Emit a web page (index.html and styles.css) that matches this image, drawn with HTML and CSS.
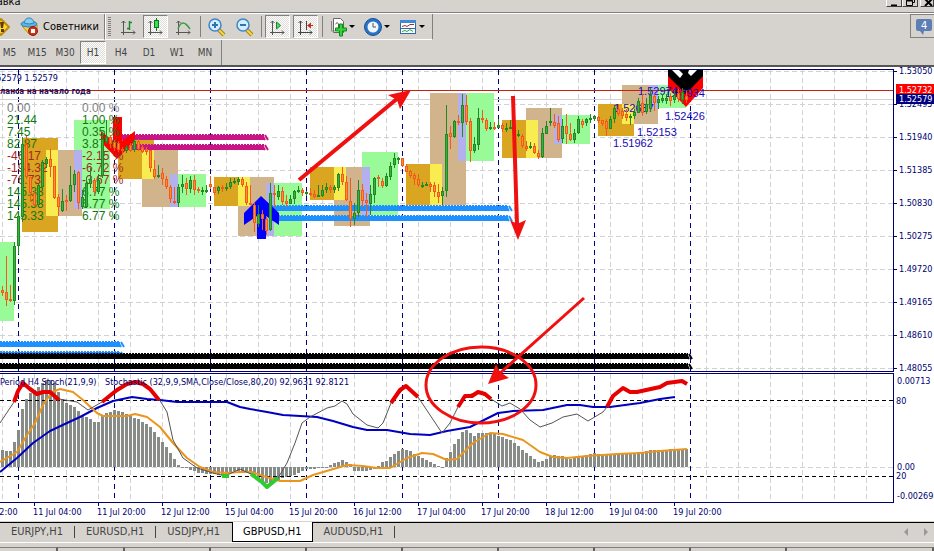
FILE: index.html
```html
<!DOCTYPE html>
<html lang="ru">
<head>
<meta charset="utf-8">
<title>GBPUSD,H1</title>
<link rel="stylesheet" href="styles.css">
</head>
<body>
<header class="menubar">
  <a class="menu-item" href="#">Справка</a>
  <div class="window-buttons">
    <button aria-label="Свернуть"><svg width="14" height="14"><path d="M4 11.500h6" stroke="#000" stroke-width="2"/></svg></button>
    <button aria-label="Восстановить"><svg width="14" height="14"><path d="M5.500 4.500v-2h6v6h-2M5 3h7M3.500 6.500h6v5h-6zM3 7h7" fill="none" stroke="#000"/></svg></button>
    <button class="close" aria-label="Закрыть"><svg width="14" height="14"><path d="M4 5l7 7M11 5l-7 7" stroke="#000" stroke-width="2"/></svg></button>
  </div>
</header>
<div class="toolbars">
  <div class="row">
    <div class="toolbar experts">
      <button class="warn" aria-label="Журнал"><svg width="18" height="20"><path d="M8 2l8 8-8 8-8-8z" fill="#ffd62e" stroke="#c08a10" stroke-width="2" stroke-linejoin="round"/><path d="M7 5h4l-1 6H8zM8 12h3v3H8z" fill="#5a3c00"/></svg></button>
      <button class="advisors"><svg width="20" height="20"><path d="M2 9l8 9 7-6V8z" fill="#f6d33c" stroke="#b08a1c"/><ellipse cx="9" cy="7" rx="8" ry="3" fill="#5ab4e6" stroke="#2f7fb5"/><path d="M4 6q1-5 5-5t5 5q-5 2-10 0z" fill="#84cef2" stroke="#3585b8"/><circle cx="13" cy="14" r="4.500" fill="#d0301c" stroke="#8e1c10"/><rect x="11" y="12" width="4" height="4" fill="#fff"/></svg>Советники</button>
    </div>
    <div class="toolbar charts">
      <span class="grip"></span>
      <button aria-label="Бары"><svg width="20" height="20"><path d="M5.500 4v14M3 15.500h14M3.500 6l2-2 2 2M15 13.500l2 2-2 2" fill="none" stroke="#555"/><path d="M11.500 4v9M12 5.500h2M9 11.500h2" stroke="#1c8a2c" stroke-width="1.500"/></svg></button>
      <button class="on" aria-label="Свечи"><svg width="20" height="20"><path d="M4.500 4v14M2 15.500h14M2.500 6l2-2 2 2M14 13.500l2 2-2 2" fill="none" stroke="#555"/><path d="M10.500 1v13" stroke="#0a7a20"/><rect x="8.500" y="3.500" width="4" height="7" fill="#3cdc50" stroke="#0a7a20"/></svg></button>
      <button aria-label="Линия"><svg width="20" height="20"><path d="M4.500 4v14M2 15.500h14M2.500 6l2-2 2 2M14 13.500l2 2-2 2" fill="none" stroke="#555"/><path d="M4 12q2-6 5-6t7 6" fill="none" stroke="#3a9a48" stroke-width="1.500"/></svg></button>
      <span class="sep"></span>
      <button aria-label="Увеличить"><svg width="20" height="20"><path d="M11 12l6 6" stroke="#a88414" stroke-width="4"/><path d="M11 12l6 6" stroke="#f7d84a" stroke-width="2"/><circle cx="8" cy="8" r="6" fill="#d3efff" stroke="#3f86c8" stroke-width="1.500"/><path d="M5 8h6M8 5v6" stroke="#2d74b4" stroke-width="2"/></svg></button>
      <button aria-label="Уменьшить"><svg width="20" height="20"><path d="M11 12l6 6" stroke="#a88414" stroke-width="4"/><path d="M11 12l6 6" stroke="#f7d84a" stroke-width="2"/><circle cx="8" cy="8" r="6" fill="#d3efff" stroke="#3f86c8" stroke-width="1.500"/><path d="M5 8h6" stroke="#2d74b4" stroke-width="2"/></svg></button>
      <span class="sep"></span>
      <button class="on" aria-label="Автопрокрутка"><svg width="20" height="20"><path d="M4.500 4v14M2 15.500h14M2.500 6l2-2 2 2M14 13.500l2 2-2 2" fill="none" stroke="#555"/><path d="M8.500 5v7l4-3.500z" fill="#58d868" stroke="#148a28"/></svg></button>
      <button class="on" aria-label="Сдвиг графика"><svg width="20" height="20"><path d="M4.500 4v14M2 15.500h14M2.500 6l2-2 2 2M14 13.500l2 2-2 2M10.500 4v9" fill="none" stroke="#444"/><path d="M11 8.500l4-3v6zM14 8h3v1h-3z" fill="#c03018"/></svg></button>
      <span class="sep"></span>
      <button class="drop" aria-label="Индикаторы"><svg width="26" height="20"><path d="M4.500 1.500h7l3 3v11h-10z" fill="#fff" stroke="#666"/><path d="M2.500 4v10h4" fill="none" stroke="#888"/><path d="M6.500 7q2-3 3 0v5" fill="none" stroke="#555"/><path d="M10.500 7h3v4h4v3h-4v5h-3v-5h-4v-3h4z" fill="#2fd838" stroke="#0b8a14"/><path d="M20 8h6l-3 3z"/></svg></button>
      <button class="drop" aria-label="Периоды"><svg width="28" height="20"><circle cx="10" cy="10" r="7" fill="#eef6ff" stroke="#2a72c8" stroke-width="3"/><circle cx="10" cy="10" r="8.500" fill="none" stroke="#1a4f94"/><path d="M10 6v4h3" fill="none" stroke="#555"/><path d="M21 8h6l-3 3z"/></svg></button>
      <button class="drop" aria-label="Шаблоны"><svg width="28" height="20"><rect x="2.500" y="3.500" width="15" height="13" fill="#fff" stroke="#2d6aa8"/><path d="M2 4.500h16" stroke="#3f8ad8" stroke-width="3"/><path d="M3 11.500h14" stroke="#2d6aa8"/><path d="M4 9.500l3-1 2 1 3-2 4 0" fill="none" stroke="#a03020"/><path d="M4 14.500l3-1 2 1 3-2 3 2" fill="none" stroke="#3a9a48"/><path d="M21 8h6l-3 3z"/></svg></button>
    </div>
    <button class="alerts" aria-label="Сообщения"><svg width="18" height="18"><path d="M3 1h12q2 0 2 2v8q0 2-2 2H9l-1 4-3-4H3q-2 0-2-2V3q0-2 2-2z" fill="#5b7fb4"/><text x="6" y="11">4</text></svg></button>
  </div>
  <div class="toolbar periods">
    <button>M5</button><button>M15</button><button>M30</button><button class="on">H1</button><button>H4</button><button>D1</button><button>W1</button><button>MN</button>
  </div>
</div>
<main class="chart">
  <svg class="plot" role="img" aria-label="GBPUSD,H1">
    <g transform="translate(0,-67)">
      <g id="grid" class="grid"></g>
      <path class="spot" d="M0 99.500h893"/>
      <g id="zones"></g>
      <g id="bands"></g>
      <path fill="#f00" d="M113 117h9v24l13-10v10l-18 18-16-17v-11l12 10z"/>
      <path fill="#00f" d="M261 196l18 17v12l-13-9v23h-9v-23l-13 9v-12z"/>
      <path fill="#f00" d="M668 76h35v12l-17 19-18-19z"/>
      <path d="M668 70h35v6l-17 18-18-18z"/>
      <path fill="#fff" d="M672 70h7l4 4-3 4zM689 70h8l-6 6-3-3z"/>
      <g class="stats" id="stats"></g>
      <path class="bid" d="M0 90.500h893"/>
      <g class="levels"><text x="614" y="112">1.52637</text><text x="638" y="95">1.52974</text><text x="665" y="97">1.52934</text></g>
      <g id="candles"></g>
      <g class="levels"><text x="613" y="147">1.51962</text><text x="637" y="136">1.52153</text><text x="665" y="120">1.52426</text></g>
      <text class="caption" x="58" y="81" text-anchor="end">1.52579 1.52579</text>
      <text class="note" x="0" y="94">ланса на начало года</text>

      <g id="bars" fill="#888c88"></g>
      <path class="level" d="M0 400.500h893M0 476.500h893"/>
      <path class="slow" d="M0 472L17 458 33 443 50 431 67 423 80 417 97 408 113 401 132 397 147 399 160 400 177 402 227 402 240 407 250 409 267 412 283 415 317 417 333 421 353 427 367 430 387 430 410 434 430 435 447 431 470 427 498 413 513 411 543 410 567 405 580 405 593 407 610 407 640 403 660 399 675 397"/>
      <path class="signal" d="M0 462L17 452 27 435 35 423 43 405 52 392 60 389 73 392 83 400 97 413 103 416 127 416 135 414 147 417 160 427 173 443 187 458 200 467 213 472 227 473 240 472 252 472 263 476 280 481 300 481 313 475 330 470 347 465 363 466 377 468 390 468 407 458 422 453 433 454 447 460 457 459 473 443 490 433 503 434 523 440 540 452 553 457 567 458 587 456 617 454 640 453 660 451 687 449"/>
      <path class="fast" d="M0 423L14 402 23 383 37 394 50 392 59 399 77 402 88 410 102 402 127 384 135 382 143 384 159 399 167 412 173 440 183 458 197 468 213 473 225 476 240 469 251 474 267 487 278 478 287 463 295 443 302 423 310 417 327 408 335 406 342 401 347 404 353 414 367 425 378 428 383 423 391 403 406 386 418 397 430 415 442 433 450 423 458 407 465 396 478 392 491 399 502 406 510 403 520 409 530 420 540 427 552 423 563 417 577 414 588 421 603 412 607 407"/>
      <path class="over" d="M14 402L18 391 23 383 30 389 37 394 43 392 50 392 59 400M102 402L117 390 127 384 135 382 143 384 150 389 159 400M391 403L400 390 406 386 418 397M458 407L465 396 472 396 478 392 485 394 491 399M607 407L613 396 623 388 630 392 637 392 660 387 667 383 682 381 687 384"/>
      <path class="under" d="M222 476h7M251 474L262 482 267 487 278 478"/>
      <text class="caption" x="0" y="385">Period H4 Stoch(21,9,9)</text>
      <text class="caption" x="105" y="385">Stochastic (32,9,9,SMA,Close/Close,80,20) 92.9631 92.8121</text>
      <g id="times" class="caption"></g>
      <g class="frame"><path d="M0 69.500h9999M0 371.500h9999M0 373.500h9999M0 502.500h9999"/></g>
      <g class="ink">
        <path d="M299 180L398 98" stroke-width="4"/>
        <path d="M513 96L517 224" stroke-width="4"/>
        <path d="M584 298L498 375" stroke-width="3"/>
        <ellipse cx="481" cy="385" rx="55" ry="38" stroke-width="3"/>
        <path class="tip" d="M411 90l-11 19-3-9-9-5zM518 240l-8-20 7 4 9-4zM488 384l8-20 4 8 9 6z"/>
      </g>
    </g>
  </svg>
  <svg class="axis">
    <g transform="translate(-893,-67)">
      <path class="edge" d="M893.500 69v303M893.500 373v130"/>
      <g id="prices"></g>
      <rect x="896" y="84" width="38" height="10" fill="#f00"/><text class="tag" x="899" y="93">1.52732</text>
      <rect x="896" y="94" width="38" height="10" fill="#000080"/><text class="tag" x="899" y="102">1.52579</text>
      <text x="897" y="384">0.00713</text><text x="896" y="404">80</text><text x="897" y="470">0.00</text><text x="896" y="479">20</text><text x="897" y="499">-0.002698</text>
    </g>
  </svg>
</main>
<nav class="tabs">
  <button>EURJPY,H1</button><button>EURUSD,H1</button><button>USDJPY,H1</button><button class="active">GBPUSD,H1</button><button>AUDUSD,H1</button>
  <span class="scroll"><svg width="26" height="8"><path d="M5 0v8L1 4zM21 0v8l4-4z" fill="#999"/></svg></span>
</nav>
<footer class="status"><span class="c1"></span><span class="c2"></span><span class="c3"></span><span></span><span></span><span></span><span></span><span></span><span></span><span class="rest"></span></footer>
<script src="chart.js"></script>
</body>
</html>
```
FILE: styles.css
```css
* { box-sizing: border-box; }
body {
  margin: 0;
  background: #d6d3ce;
  color: #000;
  font: 11px/13px "DejaVu Sans Condensed", "DejaVu Sans", sans-serif;
  overflow: hidden;
}
button { font: inherit; color: inherit; border: 0; padding: 0; margin: 0; background: none; }
svg { display: block; flex: none; }

.menubar { display: flex; justify-content: space-between; height: 13px; border-bottom: 1px solid #808080; overflow: hidden; }
.menu-item { color: #000; text-decoration: none; margin: -5px 0 0 -23px; }
.window-buttons { display: flex; margin: -7px 0 0; height: 15px; }
.window-buttons button { width: 16px; height: 14px; background: #d6d3ce; border: 1px solid #fff; border-right-color: #404040; border-bottom-color: #404040; overflow: hidden; }
.window-buttons .close { margin-left: 2px; width: 14px; }

.toolbars { border-top: 1px solid #fff; border-bottom: 2px solid #555; height: 54px; }
.row { display: flex; height: 26px; }
.toolbar { display: flex; align-items: center; border-right: 1px solid #808080; border-bottom: 1px solid #fff; }
.toolbar button { display: flex; align-items: center; justify-content: center; height: 23px; }
.toolbar .on {
  border: 1px solid #fff; border-top-color: #808080; border-left-color: #808080;
  background: repeating-conic-gradient(#fff 0 25%, #dedbd6 0 50%) 0 0 / 2px 2px;
}
.experts { width: 105px; }
.warn { width: 18px; margin-left: -7px; }
.experts .advisors { margin-left: 9px; gap: 3px; }
.charts { width: 328px; border-left: 1px solid #fff; }
.charts button { width: 25px; margin-right: 3px; }
.grip { width: 3px; height: 19px; margin: 0 4px 0 2px; background: repeating-linear-gradient(#808080 0 1px, #d6d3ce 1px 2px); }
.sep { width: 1px; height: 21px; background: #808080; margin: 0 3px 0 1px; }
.charts .drop { width: 32px; }
.alerts { margin-left: auto; width: 24px; height: 24px; border: 1px solid #808080; border-right: 0; padding: 3px 4px; overflow: hidden; }
.alerts text { fill: #fff; font-size: 11px; }
.periods { width: 222px; height: 25px; color: #444; font-size: 10px; border-bottom: 0; }
.periods button { width: 28px; }
.periods button:first-child { width: 22px; margin-right: 1px; padding-right: 3px; }
.periods .on { width: 26px; margin: 0 1px; }

.chart { display: flex; height: 453px; background: #fff; overflow: hidden; }
.plot { flex: 1 1 0; min-width: 0; height: 453px; }
.axis { width: 41px; height: 453px; }
.axis text, .caption { font-size: 9px; fill: #000070; }
.axis .tag { fill: #fff; }
.grid path { stroke: #d2d2d4; fill: none; stroke-dasharray: 5 3; }
.grid .faint { stroke: #eee; }
.grid .day { stroke: #000080; stroke-dasharray: 5 4; }
.edge, .frame path { stroke: #000070; fill: none; }
.spot { stroke: #d0d0d0; }
.bid { stroke: #c82010; }
.note { font-size: 8px; font-weight: bold; fill: #1c1060; }
.stats text { font: 12px "Liberation Sans", sans-serif; }
.stats .none { fill: #808080; }
.stats .gain { fill: #107810; }
.stats .loss { fill: #a02828; }
.levels text { font: 11px "Liberation Sans", sans-serif; fill: #1808b8; }
.level { stroke: #000; stroke-dasharray: 4 3; }
.slow, .signal, .fast, .over, .under, .ink path, .ink ellipse { fill: none; stroke-linejoin: round; }
.slow { stroke: #0000c0; stroke-width: 2; }
.signal { stroke: #ea961e; stroke-width: 2; }
.fast { stroke: #555; }
.over { stroke: #e80000; stroke-width: 4; }
.under { stroke: #2ecc2e; stroke-width: 4; }
.ink path, .ink ellipse { stroke: #f01010; }
.ink .tip { fill: #f01010; stroke: none; }

.tabs { display: flex; height: 22px; border-top: 1px solid #fff; color: #444; background: linear-gradient(#000, #000) 0 1px / 100% 1px no-repeat; }
.tabs button { padding: 0 12px 0 11px; position: relative; }
.tabs button:not(.active)::after { content: ""; position: absolute; right: 0; top: 5px; width: 1px; height: 12px; background: #444; }
.tabs button:nth-child(3)::after { display: none; }
.tabs .active { height: 20px; margin-top: 1px; padding: 0 10px; color: #000; background: #fff; border: 1px solid #000; border-top: 0; }
.tabs .scroll { margin: 7px 5px 0 auto; }
.status { display: flex; height: 10px; border-top: 1px solid #fff; padding-top: 4px; }
.status span { width: 96px; height: 6px; border-top: 1px solid #808080; border-right: 2px solid #606060; }
.status .c1 { width: 58px; }
.status .c2 { width: 67px; }
.status .c3 { width: 86px; }
.status .rest { flex: 1; }
```
FILE: chart.js
```js
const NS = 'http://www.w3.org/2000/svg';
function add(id, tag, attrs, text) {
  const el = document.createElementNS(NS, tag);
  for (const k in attrs) el.setAttribute(k, attrs[k]);
  if (text !== undefined) el.textContent = text;
  document.getElementById(id).appendChild(el);
}
const STEP = 4;

// Grid, day separators and scales
for (let x = 2; x < 893; x += 32) add('grid', 'path', { d: `M${x + .5} 70V502` });
for (let i = 0; i < 10; i++) {
  const y = 71 + i * 33;
  add('grid', 'path', { d: `M0 ${y + .5}H893` });
  add('prices', 'path', { class: 'edge', d: `M894 ${y + .5}h3` });
  add('prices', 'text', { x: 899, y: y + 3 }, (1.5305 - i * 0.00555).toFixed(5));
}
add('grid', 'path', { d: 'M0 467.5H893' });
add('grid', 'path', { class: 'faint', d: 'M0 406.5H893' });
for (let x = 18; x < 700; x += 96) add('grid', 'path', { class: 'day', d: `M${x + .5} 70V502` });
['10 Jul 12:00', '11 Jul 04:00', '11 Jul 20:00', '12 Jul 12:00', '15 Jul 04:00', '15 Jul 20:00',
 '16 Jul 12:00', '17 Jul 04:00', '17 Jul 20:00', '18 Jul 12:00', '19 Jul 04:00', '19 Jul 20:00']
  .forEach((t, i) => {
    const x = -31 + i * 64;
    add('times', 'text', { x, y: 515 }, t);
    add('times', 'path', { class: 'edge', d: `M${x + 1.5} 503v3` });
  });

// Session zones: x, y, width, height
const zones = {
  '#98fb98': [[0,242,14,79],[74,120,36,89],[170,174,36,33],[266,183,36,53],[362,152,36,63],[458,93,36,68],[554,115,36,29],[650,85,36,23]],
  '#daa520': [[22,138,36,94],[118,140,36,39],[214,177,24,29],[310,167,24,33],[406,164,24,41],[502,120,24,38],[598,104,36,32]],
  '#d2b48c': [[58,150,24,66],[142,150,36,57],[238,177,36,59],[334,167,36,59],[430,93,36,112],[526,108,36,50],[622,85,36,39]],
  '#f8ec50': [[46,150,12,66],[142,150,12,29],[238,177,12,29],[334,167,12,33],[430,164,12,41],[526,120,12,38],[622,104,12,20]],
  '#b4b0ee': [[74,150,8,59],[170,174,8,33],[266,183,8,53],[362,167,8,48],[458,93,8,68],[554,115,8,29],[650,85,8,23]]
};
for (const fill in zones) for (const [x, y, width, height] of zones[fill]) add('zones', 'rect', { x, y, width, height, fill });

// Level bands: colour, start, end, top
[['#c71585',118,264,134],['#c71585',118,264,144],['#1e90ff',256,508,205],['#1e90ff',272,508,215],
 ['#1e90ff',0,120,341],['#1e90ff',0,120,351],['#000',0,688,353],['#000',0,688,363]]
  .forEach(([c, a, b, y]) => {
    add('bands', 'rect', { x: a, y: y + 1, width: b - a, height: 5, fill: c });
    add('bands', 'path', { d: `M${a} ${y + .5}H${b}`, stroke: c, 'stroke-dasharray': '2 1' });
    add('bands', 'path', { d: `M${b - 2} ${y + 1}l3 5M${b + 1} ${y + 1}l3 5`, stroke: c, 'stroke-width': 2 });
  });

// Balance table
['0.00','21.44','7.45','82.87','-46.17','-194.32','-76.73','145.33','145.33','145.33'].forEach((v, i) => {
  const p = ['0.00','1.00','0.35','3.87','-2.15','-6.72','-3.67','6.77','6.77','6.77'][i];
  const cls = i === 0 ? 'none' : v[0] === '-' ? 'loss' : 'gain';
  add('stats', 'text', { x: 7, y: 112 + i * 12, class: cls }, v);
  add('stats', 'text', { x: 82, y: 112 + i * 12, class: cls }, p + ' %');
});

// Candles, one per hour: high, low, body top, body bottom, direction
const candles = `286 296 290 293 d|256 306 292 300 d|285 302 299 301 d|242 305 246 301 u|212 254 216 246 u|137 222 144 217 u
136 179 144 177 d|177 202 177 193 d|191 207 193 205 d|184 207 185 205 u|160 190 162 187 u|157 168 159 164 u|149 177 159 167 d
166 199 166 198 d|194 216 197 207 d|189 212 201 211 u|195 211 200 202 d|166 202 185 201 u|170 192 174 185 u|171 209 172 203 d
190 209 197 207 u|177 208 183 207 u|168 188 179 184 u|178 195 180 192 d|174 194 180 192 u|132 178 139 176 u|120 144 137 142 u
135 148 137 144 d|140 151 142 148 d|141 152 143 150 d|147 153 149 151 d|145 153 147 151 u|143 152 145 151 d|139 152 141 150 u
139 151 141 149 d|145 153 147 152 d|147 155 149 152 d|150 172 150 168 d|160 179 169 177 d|165 178 175 177 u|168 185 173 179 d
176 189 179 187 d|185 203 187 199 d|187 204 201 203 d|184 207 187 203 u|175 193 184 187 u|178 195 183 189 d|176 193 180 189 u
175 195 180 190 d|187 193 189 191 d|187 195 190 192 u|185 193 190 192 u|176 189 184 187 d|187 195 187 193 d|186 194 187 191 u
185 192 187 189 d|183 191 187 189 u|178 189 182 187 u|178 184 181 183 u|177 185 179 182 u|177 187 179 185 d|182 205 186 203 d
185 205 203 205 d|203 232 205 223 d|205 227 214 224 u|210 230 214 219 d|217 235 219 231 d|183 231 193 230 u|185 207 193 195 d
185 200 191 197 u|187 205 191 202 d|195 207 201 204 d|195 204 199 204 u|190 204 191 199 u|186 193 190 192 u|188 196 190 193 d
191 196 192 194 u|188 196 193 195 d|190 198 194 197 d|185 197 195 197 u|185 197 190 196 u|183 193 187 190 u|185 193 187 190 d
185 193 187 190 u|173 191 174 188 u|167 185 174 182 d|176 201 182 200 d|178 227 201 219 d|203 225 213 219 u|180 217 190 213 u
184 207 190 201 d|193 217 200 203 d|185 215 194 204 u|177 203 178 195 u|175 187 177 179 d|178 188 181 186 d|173 187 176 186 u
162 180 166 177 u|153 168 158 165 u|157 164 158 160 u|158 167 158 166 d|164 172 166 172 d|170 178 171 176 d|173 185 175 179 d
174 187 179 185 d|182 188 185 187 u|182 186 184 186 u|182 192 184 187 d|182 197 185 192 d|184 203 192 197 d|187 205 191 196 u
105 197 134 191 u|126 149 133 137 d|120 138 121 137 u|115 125 121 123 d|94 137 105 123 u|95 125 105 122 d|118 162 121 151 d
137 153 144 151 u|108 150 118 145 u|110 123 118 120 d|118 131 120 129 d|122 130 127 129 u|122 130 127 128 d|119 128 125 128 u
123 132 125 129 d|123 132 128 130 u|120 129 127 129 u|128 136 130 133 d|130 137 134 136 u|134 148 136 146 d|141 151 146 149 d
142 149 146 148 u|143 154 146 153 d|150 159 153 157 d|128 158 133 157 u|121 134 126 134 u|108 126 121 123 u|114 128 122 126 d
116 142 123 140 d|119 143 126 139 u|114 144 126 134 d|123 141 134 140 d|129 143 133 140 u|116 134 119 133 u|119 128 121 125 d
118 126 119 123 u|114 123 118 120 u|115 121 116 119 u|116 123 117 121 d|120 126 120 124 d|119 136 121 129 d|116 129 119 129 u
105 123 108 119 u|104 116 109 114 d|108 119 111 116 d|109 121 114 118 d|114 125 116 118 u|109 119 112 116 u|98 113 101 113 u
94 116 103 113 d|98 114 104 112 u|88 112 95 109 u|94 111 96 103 d|96 109 99 103 u|94 103 98 101 u|94 104 98 101 u
93 106 96 101 d|90 103 95 100 u|89 102 93 99 d|88 104 92 100 u|91 103 96 100 d`.split(/[|\n]/);
candles.forEach((row, i) => {
  const [hi, lo, top, bottom, dir] = row.trim().split(' ');
  const x = 2.5 + i * STEP, up = dir === 'u';
  const stroke = up ? '#1f8a24' : '#f25a1c';
  add('candles', 'path', { d: `M${x} ${hi}V${lo}`, stroke });
  add('candles', 'rect', { x: x - 1, y: +top + .5, width: 2, height: Math.max(1, bottom - top - 1), fill: up ? '#3fae40' : '#ff9030', stroke });
});

// Histogram, given by its turning points
const shape = [[2,450],[10,451],[14,442],[18,430],[22,409],[26,399],[30,393],[38,387],[42,383],[46,380],[50,380],[54,383],[58,392],
  [62,399],[66,403],[74,407],[82,415],[90,419],[94,422],[98,422],[102,415],[106,413],[114,410],[122,412],[130,416],[138,419],
  [146,424],[150,427],[158,437],[166,447],[170,453],[178,465],[186,468],[194,471],[198,473],[222,475],[234,471],[246,471],[262,481],
  [268,484],[280,479],[293,475],[300,472],[307,469],[323,468],[330,465],[342,460],[350,464],[354,471],[367,471],[377,468],
  [380,463],[386,461],[390,457],[398,451],[402,449],[410,451],[418,456],[430,462],[438,466],[442,467],[446,458],[450,452],
  [454,444],[458,439],[462,432],[466,430],[474,436],[478,433],[490,433],[502,437],[510,440],[518,446],[526,453],[538,462],
  [542,461],[550,456],[554,455],[562,456],[570,459],[578,457],[594,453],[606,455],[642,452],[650,450],[686,449]];
for (let x = 2; x <= 686; x += STEP) {
  let i = 0;
  while (i < shape.length - 2 && shape[i + 1][0] < x) i++;
  const [x0, y0] = shape[i], [x1, y1] = shape[i + 1];
  const y = Math.round(y0 + (y1 - y0) * (x - x0) / (x1 - x0));
  add('bars', 'rect', { x: x - 1, y: Math.min(y, 467), width: 3, height: Math.max(1, Math.abs(467 - y)) });
}
```
